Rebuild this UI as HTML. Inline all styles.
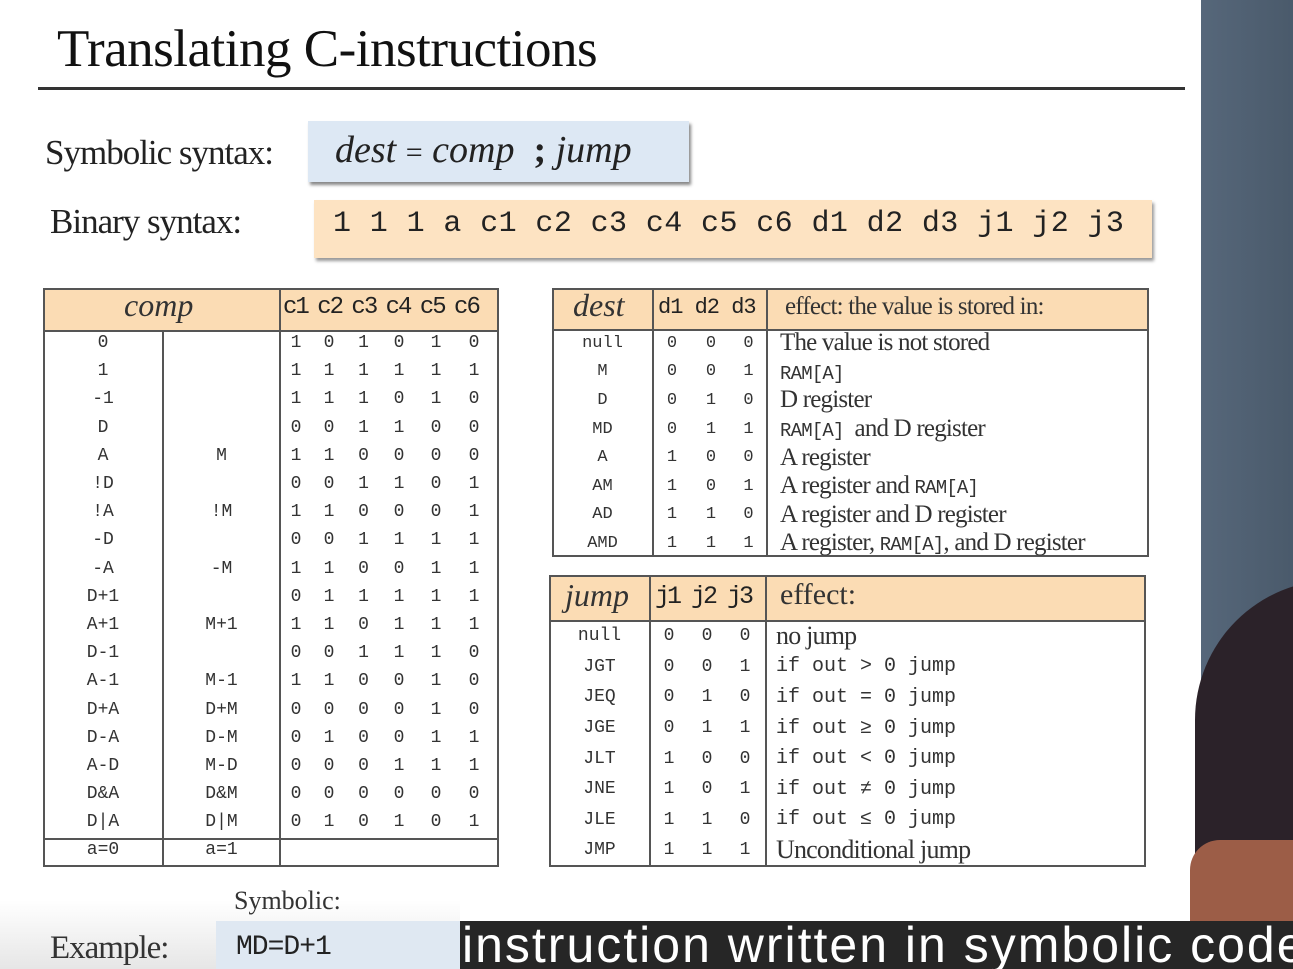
<!DOCTYPE html>
<html><head><meta charset="utf-8"><style>
*{margin:0;padding:0;box-sizing:border-box}
html,body{width:1293px;height:969px;overflow:hidden}
body{background:#fff;position:relative;font-family:"Liberation Serif",serif;color:#222}
.a{position:absolute}
.m{font-family:"Liberation Mono","DejaVu Sans Mono",monospace}
.box{position:absolute;border:2px solid #555}
.vl{position:absolute;width:2px;background:#555}
.hl{position:absolute;height:2px;background:#555}
.hdr{position:absolute;background:#fbdcb4}
.row{position:absolute;display:flex;align-items:center;white-space:nowrap}
.row span{text-align:center;display:block}
.c .row{font-family:"Liberation Mono",monospace;font-size:18px;color:#333;height:28.2px}
.d .row{height:28.6px;font-size:17px;color:#333}
.j .row{height:30.6px;font-size:18px;color:#333}
.eff{font-family:"Liberation Serif",serif;font-size:25px;color:#333;text-align:left!important;letter-spacing:-0.8px}
.effm{font-family:"Liberation Mono",monospace;font-size:20px;color:#333;text-align:left!important}
</style></head><body>
<div class="a" style="left:57px;top:19px;font-size:53px;color:#111;letter-spacing:-0.5px">Translating C-instructions</div>
<div class="a" style="left:38px;top:87px;width:1147px;height:3px;background:#333"></div>

<div class="a" style="left:45px;top:133px;font-size:35px;letter-spacing:-1px">Symbolic syntax:</div>
<div class="a" style="left:308px;top:121px;width:381px;height:61px;background:#dde8f4;box-shadow:2px 3px 3px #888"></div>
<div class="a" style="left:335px;top:128px;font-size:38px;font-style:italic;color:#222;white-space:pre">dest <span style="font-style:normal;font-size:30px">=</span> comp  <b style="font-style:normal">;</b> jump</div>

<div class="a" style="left:50px;top:202px;font-size:35px;letter-spacing:-1px">Binary syntax:</div>
<div class="a" style="left:314px;top:200px;width:838px;height:58px;background:#fde3c2;box-shadow:2px 3px 3px #999"></div>
<div class="a m" style="left:333px;top:207px;font-size:30px;color:#222;letter-spacing:0.4px">1 1 1 a c1 c2 c3 c4 c5 c6 d1 d2 d3 j1 j2 j3</div>

<!-- comp table -->
<div class="c">
<div class="hdr" style="left:43px;top:289px;width:455px;height:42px"></div>
<div class="box" style="left:43px;top:288px;width:456px;height:579px"></div>
<div class="hl" style="left:43px;top:330px;width:455px"></div>
<div class="hl" style="left:43px;top:838px;width:455px"></div>
<div class="vl" style="left:162px;top:330px;height:536px"></div>
<div class="vl" style="left:279px;top:289px;height:577px"></div>
<div class="a" style="left:124px;top:287px;font-size:32px;font-style:italic;color:#333">comp</div>
<div class="a m" style="left:283px;top:294px;font-size:24px;color:#222;letter-spacing:-2px;word-spacing:-3px">c1 c2 c3 c4 c5 c6</div>
<div style="position:absolute;left:43px;top:329px">
<div class="row" style="top:0"><span style="width:120px">0</span><span style="width:117px"></span><span style="width:32px">1</span><span style="width:34px">0</span><span style="width:35px">1</span><span style="width:36px">0</span><span style="width:38px">1</span><span style="width:38px">0</span></div>
<div class="row" style="top:28.2px"><span style="width:120px">1</span><span style="width:117px"></span><span style="width:32px">1</span><span style="width:34px">1</span><span style="width:35px">1</span><span style="width:36px">1</span><span style="width:38px">1</span><span style="width:38px">1</span></div>
<div class="row" style="top:56.4px"><span style="width:120px">-1</span><span style="width:117px"></span><span style="width:32px">1</span><span style="width:34px">1</span><span style="width:35px">1</span><span style="width:36px">0</span><span style="width:38px">1</span><span style="width:38px">0</span></div>
<div class="row" style="top:84.6px"><span style="width:120px">D</span><span style="width:117px"></span><span style="width:32px">0</span><span style="width:34px">0</span><span style="width:35px">1</span><span style="width:36px">1</span><span style="width:38px">0</span><span style="width:38px">0</span></div>
<div class="row" style="top:112.8px"><span style="width:120px">A</span><span style="width:117px">M</span><span style="width:32px">1</span><span style="width:34px">1</span><span style="width:35px">0</span><span style="width:36px">0</span><span style="width:38px">0</span><span style="width:38px">0</span></div>
<div class="row" style="top:141px"><span style="width:120px">!D</span><span style="width:117px"></span><span style="width:32px">0</span><span style="width:34px">0</span><span style="width:35px">1</span><span style="width:36px">1</span><span style="width:38px">0</span><span style="width:38px">1</span></div>
<div class="row" style="top:169.2px"><span style="width:120px">!A</span><span style="width:117px">!M</span><span style="width:32px">1</span><span style="width:34px">1</span><span style="width:35px">0</span><span style="width:36px">0</span><span style="width:38px">0</span><span style="width:38px">1</span></div>
<div class="row" style="top:197.4px"><span style="width:120px">-D</span><span style="width:117px"></span><span style="width:32px">0</span><span style="width:34px">0</span><span style="width:35px">1</span><span style="width:36px">1</span><span style="width:38px">1</span><span style="width:38px">1</span></div>
<div class="row" style="top:225.6px"><span style="width:120px">-A</span><span style="width:117px">-M</span><span style="width:32px">1</span><span style="width:34px">1</span><span style="width:35px">0</span><span style="width:36px">0</span><span style="width:38px">1</span><span style="width:38px">1</span></div>
<div class="row" style="top:253.8px"><span style="width:120px">D+1</span><span style="width:117px"></span><span style="width:32px">0</span><span style="width:34px">1</span><span style="width:35px">1</span><span style="width:36px">1</span><span style="width:38px">1</span><span style="width:38px">1</span></div>
<div class="row" style="top:282px"><span style="width:120px">A+1</span><span style="width:117px">M+1</span><span style="width:32px">1</span><span style="width:34px">1</span><span style="width:35px">0</span><span style="width:36px">1</span><span style="width:38px">1</span><span style="width:38px">1</span></div>
<div class="row" style="top:310.2px"><span style="width:120px">D-1</span><span style="width:117px"></span><span style="width:32px">0</span><span style="width:34px">0</span><span style="width:35px">1</span><span style="width:36px">1</span><span style="width:38px">1</span><span style="width:38px">0</span></div>
<div class="row" style="top:338.4px"><span style="width:120px">A-1</span><span style="width:117px">M-1</span><span style="width:32px">1</span><span style="width:34px">1</span><span style="width:35px">0</span><span style="width:36px">0</span><span style="width:38px">1</span><span style="width:38px">0</span></div>
<div class="row" style="top:366.6px"><span style="width:120px">D+A</span><span style="width:117px">D+M</span><span style="width:32px">0</span><span style="width:34px">0</span><span style="width:35px">0</span><span style="width:36px">0</span><span style="width:38px">1</span><span style="width:38px">0</span></div>
<div class="row" style="top:394.8px"><span style="width:120px">D-A</span><span style="width:117px">D-M</span><span style="width:32px">0</span><span style="width:34px">1</span><span style="width:35px">0</span><span style="width:36px">0</span><span style="width:38px">1</span><span style="width:38px">1</span></div>
<div class="row" style="top:423px"><span style="width:120px">A-D</span><span style="width:117px">M-D</span><span style="width:32px">0</span><span style="width:34px">0</span><span style="width:35px">0</span><span style="width:36px">1</span><span style="width:38px">1</span><span style="width:38px">1</span></div>
<div class="row" style="top:451.2px"><span style="width:120px">D&amp;A</span><span style="width:117px">D&amp;M</span><span style="width:32px">0</span><span style="width:34px">0</span><span style="width:35px">0</span><span style="width:36px">0</span><span style="width:38px">0</span><span style="width:38px">0</span></div>
<div class="row" style="top:479.4px"><span style="width:120px">D|A</span><span style="width:117px">D|M</span><span style="width:32px">0</span><span style="width:34px">1</span><span style="width:35px">0</span><span style="width:36px">1</span><span style="width:38px">0</span><span style="width:38px">1</span></div>
<div class="row" style="top:507px"><span style="width:120px">a=0</span><span style="width:117px">a=1</span></div>
</div>
</div>

<!-- dest table -->
<div class="d">
<div class="hdr" style="left:552px;top:289px;width:596px;height:41px"></div>
<div class="box" style="left:552px;top:288px;width:597px;height:269px"></div>
<div class="hl" style="left:552px;top:329px;width:596px"></div>
<div class="vl" style="left:652px;top:289px;height:267px"></div>
<div class="vl" style="left:766px;top:289px;height:267px"></div>
<div class="a" style="left:573px;top:287px;font-size:32px;font-style:italic;color:#333">dest</div>
<div class="a m" style="left:658px;top:295px;font-size:22px;color:#222;letter-spacing:-1px">d1 d2 d3</div>
<div class="a" style="left:785px;top:293px;font-size:25px;color:#333;letter-spacing:-0.8px">effect: the value is stored in:</div>
<div style="position:absolute;left:552px;top:329px" class="m">
<div class="row" style="top:0"><span style="width:101px">null</span><span style="width:38px">0</span><span style="width:40px">0</span><span style="width:35px">0</span><span style="width:14px"></span><span class="eff">The value is not stored</span></div>
<div class="row" style="top:28.6px"><span style="width:101px">M</span><span style="width:38px">0</span><span style="width:40px">0</span><span style="width:35px">1</span><span style="width:14px"></span><span class="eff"><span class="m" style="font-size:19px;display:inline">RAM[A]</span></span></div>
<div class="row" style="top:57.2px"><span style="width:101px">D</span><span style="width:38px">0</span><span style="width:40px">1</span><span style="width:35px">0</span><span style="width:14px"></span><span class="eff">D register</span></div>
<div class="row" style="top:85.8px"><span style="width:101px">MD</span><span style="width:38px">0</span><span style="width:40px">1</span><span style="width:35px">1</span><span style="width:14px"></span><span class="eff"><span class="m" style="font-size:19px;display:inline">RAM[A]</span>&nbsp; and D register</span></div>
<div class="row" style="top:114.4px"><span style="width:101px">A</span><span style="width:38px">1</span><span style="width:40px">0</span><span style="width:35px">0</span><span style="width:14px"></span><span class="eff">A register</span></div>
<div class="row" style="top:143px"><span style="width:101px">AM</span><span style="width:38px">1</span><span style="width:40px">0</span><span style="width:35px">1</span><span style="width:14px"></span><span class="eff">A register and <span class="m" style="font-size:19px;display:inline">RAM[A]</span></span></div>
<div class="row" style="top:171.6px"><span style="width:101px">AD</span><span style="width:38px">1</span><span style="width:40px">1</span><span style="width:35px">0</span><span style="width:14px"></span><span class="eff">A register and D register</span></div>
<div class="row" style="top:200.2px"><span style="width:101px">AMD</span><span style="width:38px">1</span><span style="width:40px">1</span><span style="width:35px">1</span><span style="width:14px"></span><span class="eff">A register, <span class="m" style="font-size:19px;display:inline">RAM[A]</span>, and D register</span></div>
</div>
</div>

<!-- jump table -->
<div class="j">
<div class="hdr" style="left:549px;top:576px;width:596px;height:45px"></div>
<div class="box" style="left:549px;top:575px;width:597px;height:292px"></div>
<div class="hl" style="left:549px;top:620px;width:596px"></div>
<div class="vl" style="left:649px;top:576px;height:290px"></div>
<div class="vl" style="left:765px;top:576px;height:290px"></div>
<div class="a" style="left:565px;top:577px;font-size:32px;font-style:italic;color:#333">jump</div>
<div class="a m" style="left:655px;top:582px;font-size:25px;color:#222;letter-spacing:-3px">j1 j2 j3</div>
<div class="a" style="left:780px;top:578px;font-size:30px;color:#333">effect:</div>
<div style="position:absolute;left:549px;top:621px" class="m">
<div class="row" style="top:0"><span style="width:101px">null</span><span style="width:38px">0</span><span style="width:38px">0</span><span style="width:38px">0</span><span style="width:12px"></span><span class="eff" style="font-size:26px">no jump</span></div>
<div class="row" style="top:30.6px"><span style="width:101px">JGT</span><span style="width:38px">0</span><span style="width:38px">0</span><span style="width:38px">1</span><span style="width:12px"></span><span class="effm">if out &gt; 0 jump</span></div>
<div class="row" style="top:61.2px"><span style="width:101px">JEQ</span><span style="width:38px">0</span><span style="width:38px">1</span><span style="width:38px">0</span><span style="width:12px"></span><span class="effm">if out = 0 jump</span></div>
<div class="row" style="top:91.8px"><span style="width:101px">JGE</span><span style="width:38px">0</span><span style="width:38px">1</span><span style="width:38px">1</span><span style="width:12px"></span><span class="effm">if out ≥ 0 jump</span></div>
<div class="row" style="top:122.4px"><span style="width:101px">JLT</span><span style="width:38px">1</span><span style="width:38px">0</span><span style="width:38px">0</span><span style="width:12px"></span><span class="effm">if out &lt; 0 jump</span></div>
<div class="row" style="top:153px"><span style="width:101px">JNE</span><span style="width:38px">1</span><span style="width:38px">0</span><span style="width:38px">1</span><span style="width:12px"></span><span class="effm">if out ≠ 0 jump</span></div>
<div class="row" style="top:183.6px"><span style="width:101px">JLE</span><span style="width:38px">1</span><span style="width:38px">1</span><span style="width:38px">0</span><span style="width:12px"></span><span class="effm">if out ≤ 0 jump</span></div>
<div class="row" style="top:214.2px"><span style="width:101px">JMP</span><span style="width:38px">1</span><span style="width:38px">1</span><span style="width:38px">1</span><span style="width:12px"></span><span class="eff" style="font-size:26px">Unconditional jump</span></div>
</div>
</div>

<!-- bottom -->
<div class="a" style="left:0;top:900px;width:460px;height:69px;background:linear-gradient(#fff,#e6e6e6)"></div>
<div class="a" style="left:234px;top:886px;font-size:26px;color:#333">Symbolic:</div>
<div class="a" style="left:216px;top:921px;width:250px;height:48px;background:#dfe8f2"></div>
<div class="a" style="left:50px;top:930px;font-size:33px;color:#333;letter-spacing:-1px">Example:</div>
<div class="a m" style="left:236px;top:932px;font-size:28px;color:#222;letter-spacing:-1px">MD=D+1</div>

<!-- right side video -->
<div class="a" style="left:1201px;top:0;width:92px;height:969px;background:linear-gradient(90deg,#56677a,#4a5a6b)"></div>
<div class="a" style="left:1195px;top:580px;width:180px;height:389px;background:#2b2229;border-radius:140px 0 0 0"></div>
<div class="a" style="left:1190px;top:840px;width:120px;height:81px;background:#9c5d47;border-radius:30px 0 0 0"></div>

<div class="a" style="left:460px;top:921px;width:833px;height:48px;background:#262626;overflow:hidden">
<div style="font-family:'Liberation Sans',sans-serif;font-size:50px;color:#fff;white-space:nowrap;margin-left:2px;margin-top:-5px;letter-spacing:2px">instruction written in symbolic code</div>
</div>
</body></html>
